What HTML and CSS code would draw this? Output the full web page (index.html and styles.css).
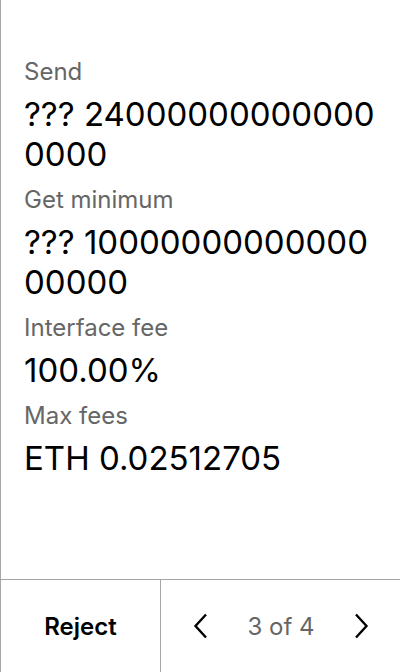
FILE: index.html
```html
<!DOCTYPE html>
<html>
<head>
<meta charset="utf-8">
<link rel="stylesheet" href="styles.css">
</head>
<body>
<div class="screen">
  <div class="content">
    <div class="item">
      <div class="label">Send</div>
      <div class="value">??? 240000000000000000</div>
    </div>
    <div class="item">
      <div class="label">Get minimum</div>
      <div class="value">??? 1000000000000000000</div>
    </div>
    <div class="item">
      <div class="label">Interface fee</div>
      <div class="value">100.00%</div>
    </div>
    <div class="item">
      <div class="label">Max fees</div>
      <div class="value">ETH 0.02512705</div>
    </div>
  </div>
  <div class="footer">
    <div class="reject">Reject</div>
    <div class="pager">
      <svg class="chev" width="16" height="26" viewBox="0 0 16 26"><path d="M13 1.5 L2.5 13 L13 24.5" fill="none" stroke="#000" stroke-width="2.4"/></svg>
      <span class="count">3 of 4</span>
      <svg class="chev" width="16" height="26" viewBox="0 0 16 26"><path d="M3 1.5 L13.5 13 L3 24.5" fill="none" stroke="#000" stroke-width="2.4"/></svg>
    </div>
  </div>
</div>
</body>
</html>
```
FILE: styles.css
```css
html, body {
  margin: 0;
  padding: 0;
  background: #fff;
}
body {
  font-family: Inter, "Noto Sans", sans-serif;
  color: #000;
}
.screen {
  width: 400px;
  height: 672px;
  box-sizing: border-box;
  border-left: 1px solid #a6a6a6;
  display: flex;
  flex-direction: column;
}
.content {
  flex: 1;
  padding: 58px 23px 0 23px;
  display: flex;
  flex-direction: column;
  gap: 12px;
}
.item {
  display: flex;
  flex-direction: column;
  gap: 8px;
}
.label {
  font-size: 24px;
  line-height: 28px;
  color: #666;
}
.value {
  font-size: 33px;
  line-height: 40px;
  word-break: break-all;
}
.footer {
  height: 92px;
  border-top: 1px solid #a6a6a6;
  display: flex;
}
.reject {
  width: 159px;
  border-right: 1px solid #a6a6a6;
  display: flex;
  align-items: center;
  justify-content: center;
  font-size: 24px;
  font-weight: 600;
}
.pager {
  flex: 1;
  display: flex;
  align-items: center;
  justify-content: space-between;
  padding: 0 31px 0 32px;
}
.count {
  font-size: 24px;
  color: #666;
}
```
